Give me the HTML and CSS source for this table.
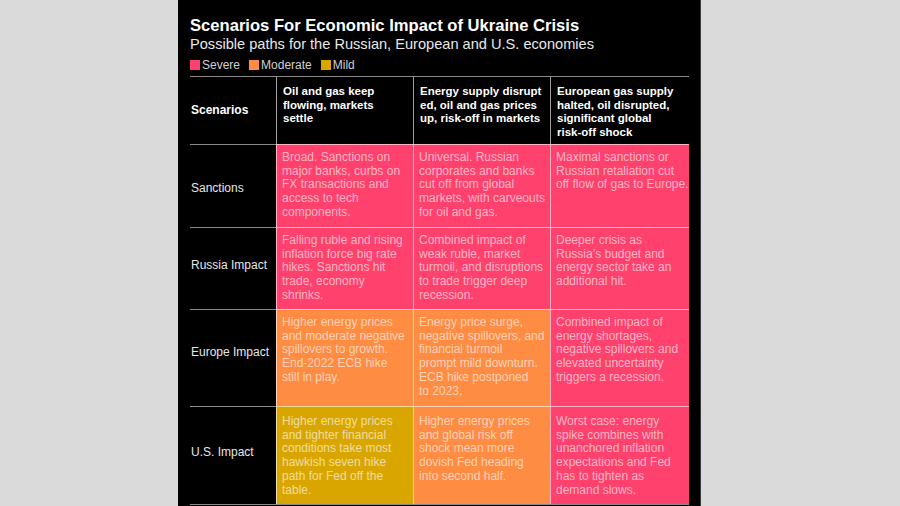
FILE: index.html
```html
<!DOCTYPE html>
<html>
<head>
<meta charset="utf-8">
<link rel="stylesheet" href="styles.css">
</head>
<body>
<div class="panel">
  <h1 class="title">Scenarios For Economic Impact of Ukraine Crisis</h1>
  <p class="subtitle">Possible paths for the Russian, European and U.S. economies</p>
  <div class="legend">
    <span class="key"><i class="sw severe"></i>Severe</span>
    <span class="key"><i class="sw moderate"></i>Moderate</span>
    <span class="key"><i class="sw mild"></i>Mild</span>
  </div>
  <div class="grid">
    <div class="hd label">Scenarios</div>
    <div class="hd">Oil and gas keep<br>flowing, markets<br>settle</div>
    <div class="hd">Energy supply disrupt<br>ed, oil and gas prices<br>up, risk-off in markets</div>
    <div class="hd">European gas supply<br>halted, oil disrupted,<br>significant global<br>risk-off shock</div>

    <div class="rl r1">Sanctions</div>
    <div class="c severe">Broad. Sanctions on<br>major banks, curbs on<br>FX transactions and<br>access to tech<br>components.</div>
    <div class="c severe">Universal. Russian<br>corporates and banks<br>cut off from global<br>markets, with carveouts<br>for oil and gas.</div>
    <div class="c severe">Maximal sanctions or<br>Russian retaliation cut<br>off flow of gas to Europe.</div>

    <div class="rl r2">Russia Impact</div>
    <div class="c severe">Falling ruble and rising<br>inflation force big rate<br>hikes. Sanctions hit<br>trade, economy<br>shrinks.</div>
    <div class="c severe">Combined impact of<br>weak ruble, market<br>turmoil, and disruptions<br>to trade trigger deep<br>recession.</div>
    <div class="c severe">Deeper crisis as<br>Russia’s budget and<br>energy sector take an<br>additional hit.</div>

    <div class="rl r3">Europe Impact</div>
    <div class="c moderate">Higher energy prices<br>and moderate negative<br>spillovers to growth.<br>End-2022 ECB hike<br>still in play.</div>
    <div class="c moderate">Energy price surge,<br>negative spillovers, and<br>financial turmoil<br>prompt mild downturn.<br>ECB hike postponed<br>to 2023.</div>
    <div class="c severe">Combined impact of<br>energy shortages,<br>negative spillovers and<br>elevated uncertainty<br>triggers a recession.</div>

    <div class="rl r4">U.S. Impact</div>
    <div class="c mild r4c">Higher energy prices<br>and tighter financial<br>conditions take most<br>hawkish seven hike<br>path for Fed off the<br>table.</div>
    <div class="c moderate r4c">Higher energy prices<br>and global risk off<br>shock mean more<br>dovish Fed heading<br>into second half.</div>
    <div class="c severe r4c">Worst case: energy<br>spike combines with<br>unanchored inflation<br>expectations and Fed<br>has to tighten as<br>demand slows.</div>
  </div>
</div>
</body>
</html>
```
FILE: styles.css
```css
html, body {
  margin: 0;
  padding: 0;
  background: #dadada;
  height: 506px;
  overflow: hidden;
}
.panel {
  margin-left: 178px;
  width: 523px;
  height: 506px;
  box-sizing: border-box;
  background: #000;
  border-right: 1px solid #3a3a3a;
  padding: 16px 0 0 12px;
  font-family: "Liberation Sans", Arial, sans-serif;
  color: #fff;
  overflow: hidden;
}
.title {
  margin: 0;
  font-size: 16.6px;
  font-weight: 700;
  line-height: 19px;
}
.subtitle {
  margin: 0;
  font-size: 14.6px;
  line-height: 18px;
  color: #e8e8e8;
}
.legend {
  display: flex;
  align-items: center;
  height: 14px;
  margin-top: 5px;
  font-size: 12px;
  color: #d0d0d0;
}
.key {
  display: flex;
  align-items: center;
  margin-right: 9px;
}
.sw {
  display: inline-block;
  width: 10px;
  height: 10px;
  margin-right: 2px;
}
.sw.severe { background: #ff416e; }
.sw.moderate { background: #ff8c43; }
.sw.mild { background: #d9a600; }
.grid {
  margin-top: 4px;
  width: 499px;
  display: grid;
  grid-template-columns: 86px 137px 137px 139px;
  grid-template-rows: 67px 83px 82px 97px 98px;
  border-top: 1px solid #8a8a8a;
  border-bottom: 1px solid #8a8a8a;
  font-size: 12px;
  line-height: 13.7px;
}
.hd {
  font-weight: 700;
  font-size: 11.5px;
  color: #fff;
  padding: 8px 2px 0 6px;
  border-left: 1px solid #a0a0a0;
  white-space: nowrap;
}
.hd.label {
  border-left: none;
  padding: 0 0 0 1px;
  display: flex;
  align-items: center;
  font-size: 12px;
}
.rl {
  border-top: 1px solid #8a8a8a;
  display: flex;
  align-items: center;
  padding-left: 1px;
  color: #e6e6e6;
}
.rl.r1 { padding-top: 5px; }
.rl.r2 { padding-bottom: 5px; }
.rl.r3 { padding-bottom: 10px; }
.rl.r4 { padding-bottom: 6px; }
.c {
  border-top: 1px solid rgba(255,255,255,0.6);
  border-left: 1px solid rgba(255,255,255,0.6);
  padding: 6px 2px 0 5px;
  color: rgba(255,255,255,0.62);
  white-space: nowrap;
}
.c.r4c { padding-top: 8px; }
.c.severe { background: #ff416e; }
.c.moderate { background: #ff8c43; }
.c.mild { background: #d9a600; }
```
